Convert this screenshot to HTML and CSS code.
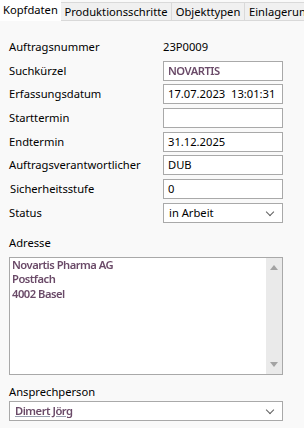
FILE: index.html
```html
<!DOCTYPE html>
<html lang="de">
<head>
  <meta charset="UTF-8" />
  <title>Auftrag 23P0009</title>
  <link rel="stylesheet" href="styles.css">
</head>
<body>

<!-- Tabs -->
<div class="tabs">
  <div class="tab active">Kopfdaten</div>
  <div class="tab t2">Produktionsschritte</div>
  <div class="tab t3">Objekttypen</div>
  <div class="tab t4">Einlagerungen</div>
</div>

<!-- Kopfdaten -->
<div class="panel">
  <div class="fields">
    <label>Auftragsnummer</label>
    <div class="value">23P0009</div>

    <label>Suchkürzel</label>
    <div class="box"><span class="blurred">NOVARTIS</span></div>

    <label>Erfassungsdatum</label>
    <div class="box">17.07.2023&nbsp; 13:01:31</div>

    <label>Starttermin</label>
    <div class="box"></div>

    <label>Endtermin</label>
    <div class="box">31.12.2025</div>

    <label>Auftragsverantwortlicher</label>
    <div class="box">DUB</div>

    <label class="shift">Sicherheitsstufe</label>
    <div class="box">0</div>

    <label>Status</label>
    <div class="box select">in Arbeit <span class="chevron"></span></div>
  </div>

  <div class="section-label">Adresse</div>
  <div class="memo">
    <div class="memo-text blurred">
      Novartis Pharma AG<br>
      Postfach<br>
      4002 Basel
    </div>
    <div class="scrollbar">
      <span class="arrow up"></span>
      <span class="arrow down"></span>
    </div>
  </div>

  <div class="section-label contact">Ansprechperson</div>
  <div class="box select wide"><span class="blurred underlined">Dimert Jörg</span> <span class="chevron"></span></div>
</div>

</body>
</html>
```

FILE: styles.css
```css
body {
  margin: 0;
  background: #f9f9f9;
  font-family: "Noto Sans", "Open Sans", sans-serif;
  font-size: 11.2px;
  color: #000;
  width: 304px;
  overflow: hidden;
}

.tabs {
  display: flex;
  height: 21px;
  padding-top: 2px;
  box-sizing: border-box;
  white-space: nowrap;
  overflow: hidden;
}

.tab {
  flex: none;
  line-height: 17px;
  background: #f0f0f0;
  border: 1px solid #d9d9d9;
  border-left: none;
  box-sizing: border-box;
  height: 19px;
  text-align: center;
  overflow: hidden;
}

.tab.active {
  width: 61px;
  background: #fff;
  border: none;
  height: 21px;
  margin-top: -2px;
  padding-top: 2px;
  line-height: 16px;
  text-align: left;
  padding-left: 3px;
}

.t2 {
  width: 111px;
}

.t3 {
  width: 73px;
}

.t4 {
  width: 64px;
  text-align: left;
  padding-left: 4px;
}

.panel {
  padding: 16px 21px 0 9px;
}

.fields {
  display: grid;
  grid-template-columns: 154px 120px;
  row-gap: 3.7px;
  align-items: center;
}

.fields label {
  line-height: 16px;
}

.fields label.shift {
  padding-left: 1px;
}

.value {
  line-height: 20px;
  height: 20px;
}

.box {
  height: 20px;
  line-height: 18px;
  border: 1px solid #a9a9a9;
  background: #fff;
  box-sizing: border-box;
  padding: 0 4px;
  position: relative;
  white-space: nowrap;
}

.select {
  padding-left: 5px;
}

.chevron {
  position: absolute;
  right: 9px;
  top: 5px;
  width: 5px;
  height: 5px;
  border-right: 1px solid #606060;
  border-bottom: 1px solid #606060;
  transform: rotate(45deg);
}

/* anonymisierte Werte */
.blurred {
  color: #6a4a68;
  font-weight: 600;
  letter-spacing: -0.5px;
  filter: blur(0.5px);
}

.underlined {
  text-decoration: underline;
  text-decoration-color: #9aa0b0;
}

.section-label {
  margin-top: 12px;
  line-height: 16px;
  height: 16px;
}

.section-label.contact {
  margin-top: 9px;
}

.memo {
  display: flex;
  height: 118px;
  border: 1px solid #a9a9a9;
  background: #fff;
  box-sizing: border-box;
  margin-top: 6px;
}

.memo-text {
  flex: 1;
  padding: 0 2px;
  line-height: 14.5px;
}

.scrollbar {
  width: 16px;
  background: #eaeaea;
  display: flex;
  flex-direction: column;
  justify-content: space-between;
  align-items: center;
  padding: 7px 0;
}

.arrow {
  width: 0;
  height: 0;
  border-left: 4px solid transparent;
  border-right: 4px solid transparent;
}

.arrow.up {
  border-bottom: 5px solid #a3a3a3;
}

.arrow.down {
  border-top: 5px solid #a3a3a3;
}

.wide {
  margin-top: 1px;
}
```
